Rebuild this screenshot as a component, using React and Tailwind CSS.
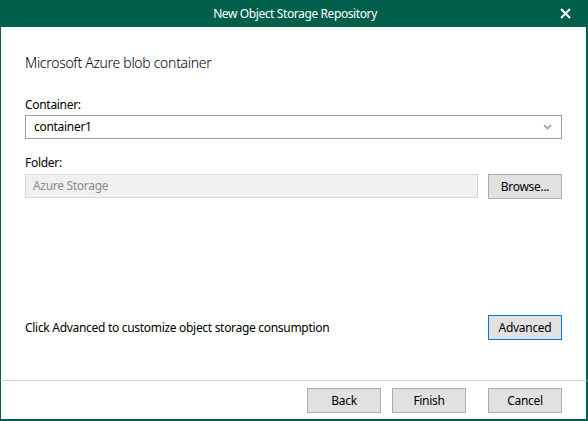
import { useState } from "react";

const font = { fontFamily: '"Noto Sans", "Segoe UI", sans-serif' };

const Button = ({ children, focused }) => (
  <button
    className={`h-[25px] w-[74px] bg-[#e1e1e1] text-[12px] tracking-[-0.3px] text-black ${
      focused ? "border border-[#0078d7]" : "border border-[#adadad]"
    }`}
  >
    {children}
  </button>
);

const App = () => {
  const [container] = useState("container1");

  return (
    <div
      className="w-[588px] h-[421px] flex flex-col bg-white text-black overflow-hidden"
      style={font}
    >
      <div className="h-[27px] shrink-0 bg-[#005f4b] flex items-center relative">
        <div className="flex-1 text-center text-white text-[12px] tracking-[-0.4px] pl-[2px]">
          New Object Storage Repository
        </div>
        <svg
          className="absolute right-[17px] top-[8px]"
          width="11"
          height="11"
          viewBox="0 0 11 11"
        >
          <path
            d="M1 1 L10 10 M10 1 L1 10"
            stroke="white"
            strokeWidth="2"
            fill="none"
          />
        </svg>
      </div>

      <div className="flex-1 flex flex-col border-l border-r-2 border-[#005f4b] px-[24px]">
        <div className="pt-[26px] text-[14px] leading-[20px] font-light tracking-[-0.3px]">
          Microsoft Azure blob container
        </div>

        <div className="mt-[24px] text-[12px] leading-[16px] tracking-[-0.3px]">
          Container:
        </div>
        <div className="mt-[2px] h-[24px] border border-[#a0a0a0] flex items-center justify-between pl-[8px] pr-[9px] text-[12px] tracking-[-0.3px]">
          <span>{container}</span>
          <svg width="9" height="6" viewBox="0 0 9 6">
            <path
              d="M1 1 L4.5 4.5 L8 1"
              stroke="#9a9a9a"
              strokeWidth="1.6"
              fill="none"
            />
          </svg>
        </div>

        <div className="mt-[16px] text-[12px] leading-[16px] tracking-[-0.3px]">
          Folder:
        </div>
        <div className="mt-[3px] flex gap-[10px]">
          <div className="flex-1 h-[24px] border border-[#d9d9d9] bg-[#f0f0f0] flex items-center pl-[7px] text-[12px] tracking-[-0.3px] text-[#8a8a8a]">
            Azure Storage
          </div>
          <Button>Browse...</Button>
        </div>

        <div className="mt-auto mb-[40px] flex items-center justify-between">
          <span className="text-[12px] tracking-[-0.3px]">
            Click Advanced to customize object storage consumption
          </span>
          <Button focused>Advanced</Button>
        </div>
      </div>

      <div className="h-[41px] shrink-0 border-t border-t-[#d0d0d0] border-l border-r-2 border-b-2 border-l-[#005f4b] border-r-[#005f4b] border-b-[#005f4b] flex items-start justify-end pt-[7px] pr-[24px]">
        <div className="flex">
          <Button>Back</Button>
          <div className="w-[11px]" />
          <Button>Finish</Button>
          <div className="w-[22px]" />
          <Button>Cancel</Button>
        </div>
      </div>
    </div>
  );
};

export default App;
